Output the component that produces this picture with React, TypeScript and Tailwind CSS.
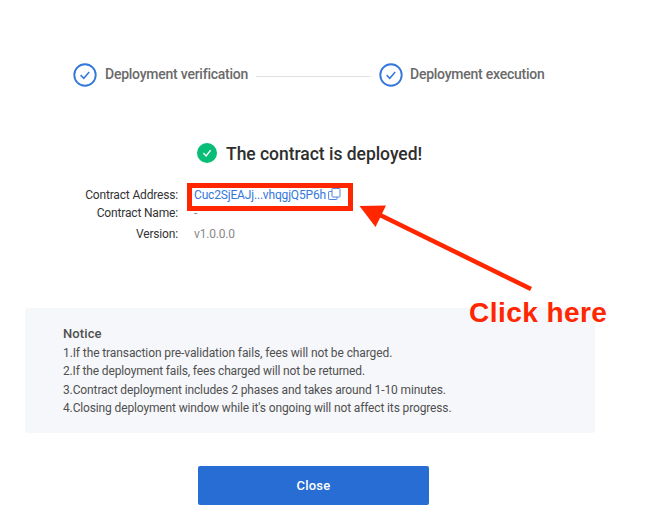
function StepCheck() {
  return (
    <svg className="block h-[24px] w-[24px] shrink-0" viewBox="0 0 24 24" fill="none" stroke="#3478dc">
      <circle cx="12" cy="12" r="10.7" strokeWidth="1.9" />
      <path d="M7.6 12.1l3.2 3.2 5.4-6.4" strokeWidth="1.5" />
    </svg>
  );
}

function CopyIcon() {
  return (
    <svg className="mb-[2px] ml-[2px] block h-[12px] w-[13px]" viewBox="0 0 13 12" fill="none" stroke="#4f86dc" strokeWidth="1">
      <rect x="4" y="0.5" width="8" height="8.5" rx="0.6" />
      <path d="M4 3.5H1.2a.6.6 0 0 0-.6.6v6.8a.6.6 0 0 0 .6.6h7.2a.6.6 0 0 0 .6-.6V9" />
    </svg>
  );
}

const notices = [
  { text: "1.If the transaction pre-validation fails, fees will not be charged.", style: "tracking-[-0.1px]" },
  { text: "2.If the deployment fails, fees charged will not be returned.", style: "tracking-[-0.15px]" },
  { text: "3.Contract deployment includes 2 phases and takes around 1-10 minutes.", style: "tracking-[-0.12px]" },
  { text: "4.Closing deployment window while it's ongoing will not affect its progress.", style: "tracking-[-0.14px]" },
];

export default function App() {
  return (
    <main className="relative h-[521px] w-[661px] overflow-hidden bg-white pt-[63px] font-['Roboto',sans-serif] text-[#505050]">
      <div className="ml-[73px] flex h-[24px] items-center text-[14px] font-medium tracking-[-0.24px] whitespace-nowrap text-[#6a6a6a]">
        <StepCheck />
        <span className="-mt-px ml-[8px] w-[151px]">Deployment verification</span>
        <span className="mt-[2px] h-px w-[115px] bg-[#e1e1e1]" />
        <span className="ml-[8px]"><StepCheck /></span>
        <span className="-mt-px ml-[7px]">Deployment execution</span>
      </div>

      <div className="mt-[54px] ml-[197px] flex h-[24px] items-center text-[17.5px] font-medium tracking-[-0.03px] whitespace-nowrap text-[#2e2e2e]">
        <svg className="block h-[20px] w-[20px]" viewBox="0 0 20 20" fill="none">
          <circle cx="10" cy="10" r="10" fill="#08bd75" />
          <path d="M6.4 10.1l2.7 2.8 4.5-5.6" stroke="#fff" strokeWidth="1.4" />
        </svg>
        <h1 className="mt-[2px] ml-[9px]">The contract is deployed!</h1>
      </div>

      <dl className="mt-[21px] grid grid-cols-[178px_1fr] grid-rows-[18px_17px_25px] items-center gap-x-[16px] text-[12px] tracking-[-0.17px] whitespace-nowrap text-[#333]">
        <dt className="text-right">Contract Address:</dt>
        <dd className="flex items-center text-[#3478dc]">
          <span>Cuc2SjEAJj...vhqgjQ5P6h</span>
          <CopyIcon />
        </dd>
        <dt className="text-right">Contract Name:</dt>
        <dd className="text-[#888]">-</dd>
        <dt className="text-right">Version:</dt>
        <dd className="text-[#888]">v1.0.0.0</dd>
      </dl>

      <section className="mt-[62px] ml-[25px] h-[125px] w-[570px] rounded-[3px] bg-[#f6f7fa] pt-[17px] pl-[38px] whitespace-nowrap">
        <h2 className="mb-px text-[13px] leading-[18px] font-medium tracking-[0.1px]">Notice</h2>
        {notices.map((n) => (
          <p key={n.text} className={"text-[12px] leading-[18.3px] " + n.style}>{n.text}</p>
        ))}
      </section>

      <button className="mt-[33px] ml-[198px] block h-[39px] w-[231px] rounded-[2px] bg-[#276dd3] text-[13px] font-medium tracking-[0.2px] text-white">
        Close
      </button>

      <div className="absolute top-[183px] left-[187px] h-[28px] w-[166px] border-[5px] border-[#ff2600]" />
      <svg className="absolute top-[200px] left-[355px] h-[95px] w-[180px]" viewBox="355 200 180 95">
        <path d="M378 214L531 289" stroke="#ff2600" strokeWidth="4.5" />
        <path d="M359.5 206L386 205.5L375.5 227Z" fill="#ff2600" />
      </svg>
      <p className="absolute top-[296px] left-[469px] font-['Liberation_Sans',sans-serif] text-[28px] leading-[34px] font-bold tracking-[0.45px] whitespace-nowrap text-[#ff2600]">
        Click here
      </p>
    </main>
  );
}
